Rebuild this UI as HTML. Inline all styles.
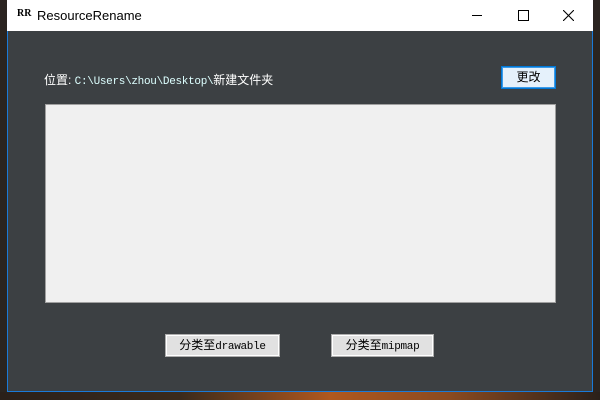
<!DOCTYPE html>
<html><head><meta charset="utf-8"><style>
body{margin:0;width:600px;height:400px;overflow:hidden;background:#2a2420;font-family:"Liberation Sans","Noto Sans CJK SC",sans-serif;position:relative}
#bg{position:absolute;left:0;top:392px;width:600px;height:8px;background:linear-gradient(90deg,#2a201a,#3a2a1c 30%,#b0581e 55%,#8a4a20 75%,#2a201a)}
#win{position:absolute;left:7px;top:0;width:584px;height:391px;border:1px solid #1a7ad8;border-top:0;background:#3c4043}
#tb{position:absolute;left:-1px;top:0;width:586px;height:31px;background:#fff}
.t{position:absolute;font-size:13px;color:#000}
.lbl{position:absolute;left:36px;top:71px;font-size:12px;color:#fff;white-space:nowrap}
.mono{font-family:"Liberation Mono",monospace;font-size:11px;color:#dff;letter-spacing:-0.3px}
.btn{position:absolute;background:#e1e1e1;border:1px solid #adadad;box-shadow:inset 0 0 0 1px #fff;font-size:12px;color:#000;text-align:center;box-sizing:border-box}
</style></head><body>
<div id="bg"></div>
<div id="win">
<div id="tb">
<div class="t" style="left:10px;top:8px;font-size:10px;font-weight:bold;font-family:'Liberation Serif',serif">RR</div>
<div class="t" style="left:30px;top:8px">ResourceRename</div>
<div style="position:absolute;left:465px;top:15px;width:10px;height:1px;background:#000"></div>
<div style="position:absolute;left:511px;top:10px;width:9px;height:9px;border:1px solid #000"></div>
<svg style="position:absolute;left:556px;top:10px" width="11" height="11"><path d="M0 0L11 11M11 0L0 11" stroke="#000" stroke-width="1.1"/></svg>
</div>
<div class="lbl">位置: <span class="mono">C:\Users\zhou\Desktop\</span>新建文件夹</div>
<div class="btn" style="left:493px;top:66px;width:55px;height:23px;border:1px solid #0078d7;box-shadow:inset 0 0 0 1px #3c9be8;background:#e5f1fb;line-height:21px">更改</div>
<div style="position:absolute;left:37px;top:104px;width:511px;height:199px;background:#f0f0f0;border:1px solid #a0a0a0;box-sizing:border-box"></div>
<div class="btn" style="left:157px;top:334px;width:115px;height:23px;line-height:21px">分类至<span class="mono" style="color:#000">drawable</span></div>
<div class="btn" style="left:323px;top:334px;width:103px;height:23px;line-height:21px">分类至<span class="mono" style="color:#000">mipmap</span></div>
</div>
</body></html>
